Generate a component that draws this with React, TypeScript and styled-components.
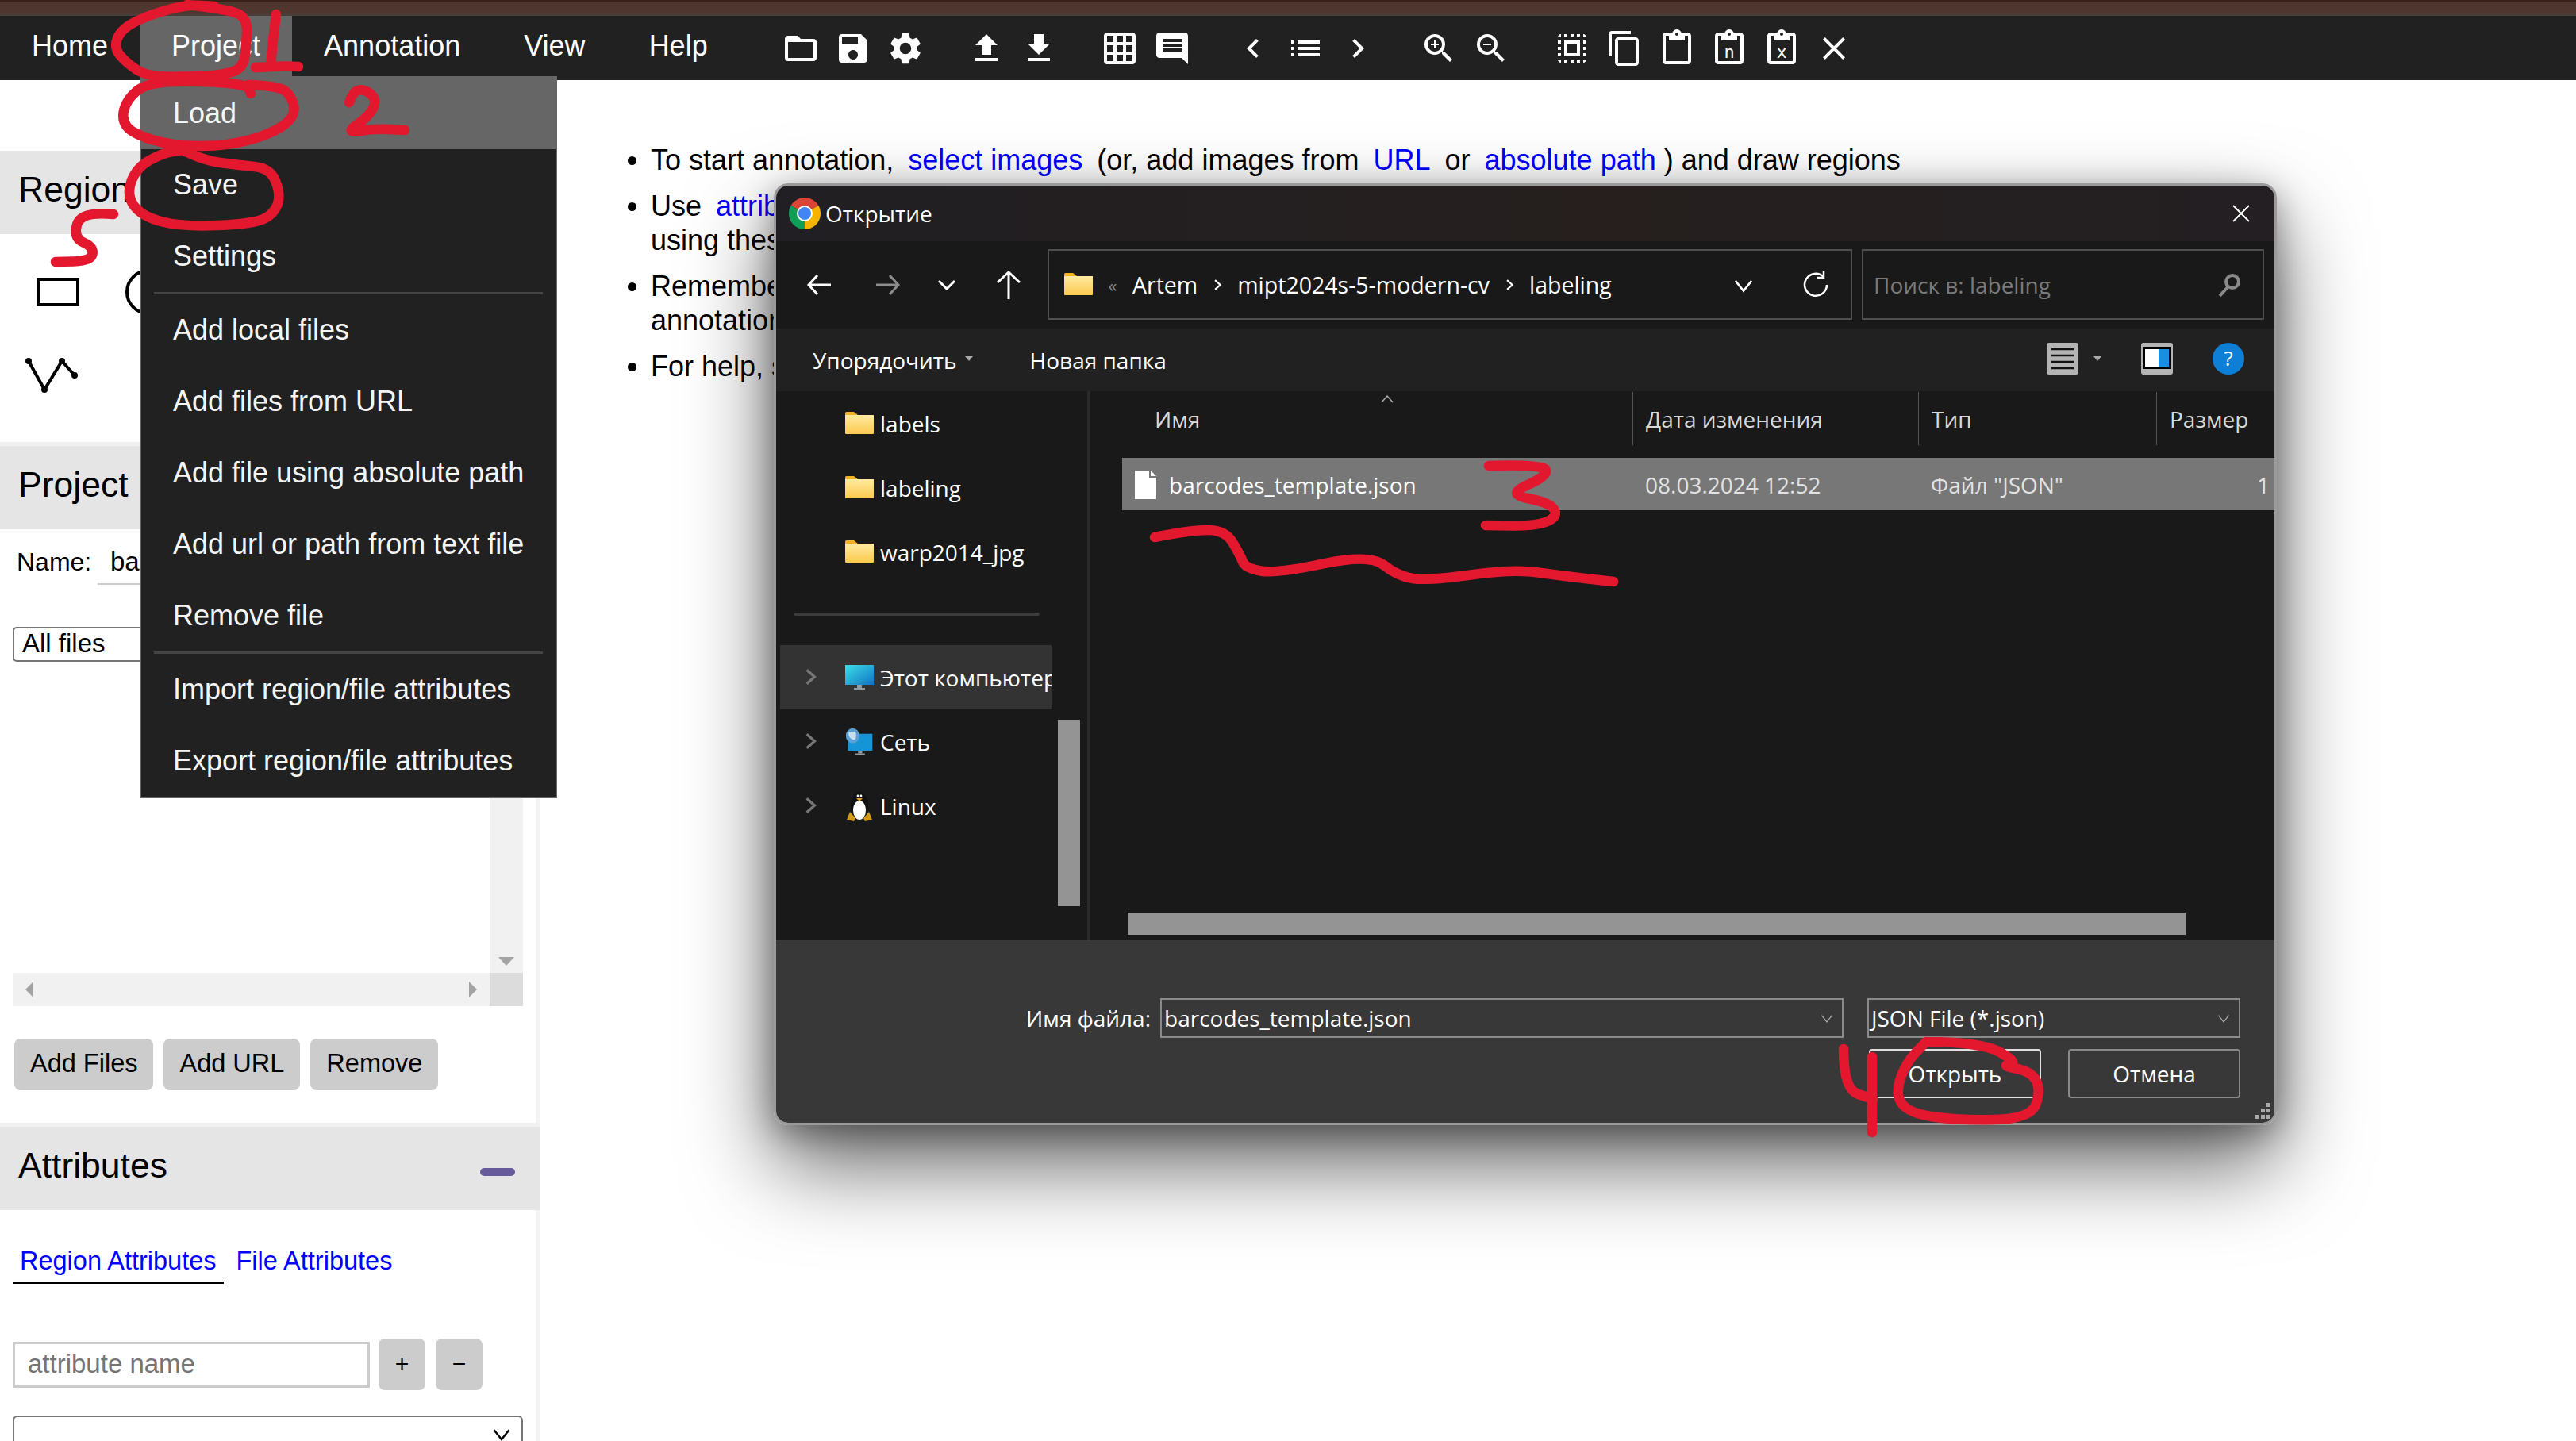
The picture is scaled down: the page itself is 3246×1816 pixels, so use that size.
import React from "react";
import styled, { createGlobalStyle } from "styled-components";
import {
  MdSave,
  MdSettings,
  MdFileUpload,
  MdFileDownload,
  MdGridOn,
  MdComment,
  MdNavigateBefore,
  MdNavigateNext,
  MdList,
  MdZoomIn,
  MdZoomOut,
  MdSelectAll,
  MdContentCopy,
  MdClose,
} from "react-icons/md";

const WIN_FONT = `"Open Sans", "Noto Sans", sans-serif`;

const PASTE_PATH =
  "M19 2h-4.18C14.4.84 13.3 0 12 0c-1.3 0-2.4.84-2.82 2H5c-1.1 0-2 .9-2 2v16c0 1.1.9 2 2 2h14c1.1 0 2-.9 2-2V4c0-1.1-.9-2-2-2zm-7 0c.55 0 1 .45 1 1s-.45 1-1 1-1-.45-1-1 .45-1 1-1zm7 18H5V4h2v3h10V4h2v16z";

const MENU_ITEMS = ["Home", "Project", "Annotation", "View", "Help"];

const PROJECT_MENU = [
  ["Load", "Save", "Settings"],
  ["Add local files", "Add files from URL", "Add file using absolute path", "Add url or path from text file", "Remove file"],
  ["Import region/file attributes", "Export region/file attributes"],
];

// hand drawn marks on top of the screenshot, page coordinates
const MARKS: number[][][] = [
  [[236, 6], [290, 12], [312, 24], [310, 60], [306, 86], [280, 95], [225, 97], [185, 96], [160, 80], [143, 60], [153, 36], [190, 18], [236, 6], [270, 8]],
  [[348, 18], [344, 50], [341, 84]],
  [[322, 85], [350, 83], [376, 84]],
  [[312, 107], [350, 108], [367, 120], [373, 146], [344, 168], [287, 184], [217, 184], [166, 168], [153, 150], [160, 125], [185, 104], [255, 102], [312, 107], [316, 118]],
  [[440, 129], [445, 115], [459, 112], [475, 125], [466, 146], [434, 168], [472, 162], [510, 164]],
  [[230, 189], [255, 202], [300, 208], [341, 212], [354, 246], [345, 270], [319, 282], [230, 286], [179, 273], [159, 246], [172, 211], [205, 193], [230, 189]],
  [[143, 270], [102, 266], [92, 300], [118, 311], [115, 329], [70, 330]],
  [[1876, 587], [1946, 585], [1950, 600], [1898, 623], [1952, 633], [1964, 650], [1938, 663], [1872, 662]],
  [[1455, 677], [1500, 668], [1544, 668], [1563, 700], [1569, 716], [1608, 723], [1726, 698], [1761, 726], [1799, 732], [1907, 717], [1970, 726], [2033, 733]],
  [[2323, 1322], [2323, 1373], [2360, 1385]],
  [[2359, 1332], [2359, 1427]],
  [[2427, 1313], [2498, 1313], [2544, 1340], [2521, 1343], [2559, 1350], [2572, 1373], [2559, 1410], [2467, 1412], [2406, 1403], [2388, 1380], [2401, 1340], [2427, 1313]],
];

const smoothPath = (pts: number[][]) => {
  let d = `M${pts[0][0]} ${pts[0][1]}`;
  for (let i = 1; i < pts.length - 1; i++) {
    const mx = (pts[i][0] + pts[i + 1][0]) / 2;
    const my = (pts[i][1] + pts[i + 1][1]) / 2;
    d += ` Q${pts[i][0]} ${pts[i][1]} ${mx} ${my}`;
  }
  const last = pts[pts.length - 1];
  return `${d} L${last[0]} ${last[1]}`;
};

const GlobalStyle = createGlobalStyle`
  html, body {
    margin: 0;
    width: 3246px;
    height: 1816px;
    overflow: hidden;
    background: #fff;
    font-family: "Liberation Sans", Arial, sans-serif;
  }
  * { box-sizing: border-box; }
`;

const Page = styled.div`
  position: relative;
  width: 3246px;
  height: 1816px;
  overflow: hidden;
  display: flex;
  flex-direction: column;
`;

const BrowserStrip = styled.div`
  height: 20px;
  flex: none;
  background: #4f362e;
  border-top: 2px solid #3a2118;
  border-bottom: 3px solid #4a3c38;
`;

const TopBar = styled.div`
  height: 81px;
  flex: none;
  background: #212121;
  display: flex;
  align-items: flex-start;
`;

const TopItem = styled.div<{ $active?: boolean }>`
  height: 76px;
  padding: 0 40px;
  font-size: 36px;
  line-height: 76px;
  color: #fff;
  background: ${(p) => (p.$active ? "#666" : "transparent")};
`;

const Tools = styled.div`
  display: flex;
  align-items: center;
  height: 81px;
  margin-left: 53px;
  gap: 54px;
`;

const ToolGroup = styled.div`
  display: flex;
  align-items: center;
  gap: 18px;
  color: #fff;
  svg {
    display: block;
    width: 48px;
    height: 48px;
    fill: #fff;
  }
`;

const Main = styled.div`
  flex: 1;
  display: flex;
  min-height: 0;
`;

const Sidebar = styled.div`
  width: 680px;
  flex: none;
  padding-top: 89px;
  overflow: hidden;
  background: linear-gradient(90deg, #fff 675px, #f3f3f3 675px);
`;

const SectionTitle = styled.div`
  height: 105px;
  background: #e5e5e5;
  padding: 0 24px 8px 23px;
  font-size: 44.5px;
  color: #000;
  display: flex;
  align-items: center;
  justify-content: space-between;
`;

const Collapse = styled.div`
  width: 44px;
  height: 10px;
  margin: 16px 7px 0 0;
  border-radius: 5px;
  background: #675a9b;
`;

const Divider = styled.div`
  height: 5px;
  background: #f0f0f0;
`;

const ShapeGrid = styled.div`
  display: grid;
  grid-template-columns: 127px 127px;
  grid-auto-rows: 105px;
  align-items: center;
  padding: 20px 0 32px 30px;
  svg {
    display: block;
    fill: none;
    stroke: #000;
    stroke-width: 4;
  }
`;

const ProjectBody = styled.div`
  width: 675px;
  height: 748px;
  padding: 0 16px;
  display: flex;
  flex-direction: column;
`;

const NameRow = styled.div`
  height: 70px;
  display: flex;
  align-items: flex-end;
  font-size: 32px;
  color: #000;
`;

const NameLabel = styled.span`
  width: 107px;
  padding: 0 0 10px 5px;
`;

const NameInput = styled.span`
  flex: 1;
  padding: 0 0 8px 16px;
  font-size: 33px;
  border-bottom: 2px solid #ccc;
`;

const FilterSelect = styled.div`
  width: 643px;
  height: 44px;
  margin-top: 53px;
  padding: 0 10px;
  flex: none;
  border: 2px solid #767676;
  border-radius: 5px;
  font-size: 33px;
  line-height: 38px;
`;

const FileList = styled.div`
  width: 643px;
  height: 426px;
  margin-top: 8px;
  flex: none;
  display: grid;
  grid-template-columns: 1fr 42px;
  grid-template-rows: 1fr 42px;
`;

const ListPane = styled.div`
  background: #fff;
`;

const VTrack = styled.div`
  background: #f1f1f1;
  display: flex;
  align-items: flex-end;
  justify-content: center;
  padding-bottom: 9px;
`;

const HTrack = styled.div`
  background: #f1f1f1;
  display: flex;
  align-items: center;
  justify-content: space-between;
  padding: 0 16px;
`;

const Corner = styled.div`
  background: #dcdcdc;
`;

const Arrow = styled.i<{ $dir: "left" | "right" | "down" }>`
  display: block;
  width: 0;
  height: 0;
  ${(p) =>
    p.$dir === "down"
      ? "border-left: 10px solid transparent; border-right: 10px solid transparent; border-top: 11px solid #a3a3a3;"
      : `border-top: 10px solid transparent; border-bottom: 10px solid transparent; border-${
          p.$dir === "left" ? "right" : "left"
        }: 10px solid #a3a3a3;`}
`;

const ButtonRow = styled.div`
  display: flex;
  gap: 13px;
  margin: 41px 0 0 2px;
`;

const GrayButton = styled.div<{ $square?: boolean }>`
  height: 65px;
  padding: 0 ${(p) => (p.$square ? "0" : "20px")};
  width: ${(p) => (p.$square ? "59px" : "auto")};
  border-radius: 8px;
  background: #ccc;
  color: #000;
  font-size: ${(p) => (p.$square ? "30px" : "32.5px")};
  line-height: 63px;
  text-align: center;
`;

const Tabs = styled.div`
  display: flex;
  gap: 16px;
  padding: 46px 16px 0;
  font-size: 32.5px;
`;

const Tab = styled.div<{ $active?: boolean }>`
  height: 47px;
  padding: 0 ${(p) => (p.$active ? "9px" : "0")};
  color: #00f;
  border-bottom: ${(p) => (p.$active ? "3px solid #000" : "none")};
`;

const AttrRow = styled.div`
  display: flex;
  align-items: center;
  gap: 13px;
  padding: 69px 0 0 16px;
`;

const AttrInput = styled.div`
  width: 450px;
  height: 58px;
  margin-right: -2px;
  padding-left: 16px;
  border: 3px solid #ccc;
  font-size: 33px;
  line-height: 50px;
  color: #757575;
`;

const AttrSelect = styled.div`
  width: 643px;
  height: 60px;
  margin: 32px 0 0 16px;
  border: 2px solid #767676;
  border-radius: 6px;
  display: flex;
  justify-content: flex-end;
  padding: 8px 12px 0 0;
`;

const Content = styled.ul`
  flex: 1;
  margin: 0;
  padding: 79px 0 0 140px;
  font-size: 36px;
  line-height: 43px;
  color: #000;
  white-space: nowrap;
`;

const Hint = styled.li`
  margin-bottom: 15px;
`;

const Link = styled.span<{ $tight?: boolean }>`
  color: #00f;
  padding: 0 ${(p) => (p.$tight ? "0" : "8px")} 0 8px;
`;

const ProjectMenu = styled.div`
  position: absolute;
  left: 176px;
  top: 96px;
  width: 526px;
  background: #212121;
  border: 2px solid #666;
`;

const MenuRow = styled.div<{ $hover?: boolean }>`
  height: 90px;
  padding-left: 40px;
  font-size: 36px;
  line-height: 90px;
  color: #f4f4f4;
  background: ${(p) => (p.$hover ? "#666" : "transparent")};
`;

const MenuRule = styled.div`
  height: 3px;
  margin: 0 16px;
  background: #454545;
`;

const Dialog = styled.div`
  position: absolute;
  left: 975px;
  top: 231px;
  width: 1894px;
  height: 1187px;
  display: flex;
  flex-direction: column;
  overflow: hidden;
  border: 3px solid #9a9a9a;
  border-radius: 18px;
  font-family: ${WIN_FONT};
  font-size: 28px;
  color: #fff;
`;

const DialogShadow = styled.div`
  position: absolute;
  left: 975px;
  top: 231px;
  width: 1894px;
  height: 1187px;
  border-radius: 18px;
  box-shadow: 0 50px 110px rgba(0, 0, 0, 0.6), 0 10px 40px rgba(0, 0, 0, 0.35);
`;

const TitleBar = styled.div`
  height: 70px;
  flex: none;
  display: flex;
  align-items: center;
  padding: 0 31px 0 16px;
  background: linear-gradient(90deg, #211f23, #261f1e 55%, #231f22);
`;

const Fill = styled.div`
  flex: 1;
`;

const TitleText = styled.span`
  margin-left: 6px;
`;

const AddressRow = styled.div`
  height: 110px;
  flex: none;
  display: flex;
  align-items: flex-start;
  padding-top: 10px;
  background: #191919;
`;

const NavButtons = styled.div`
  width: 342px;
  height: 89px;
  flex: none;
  display: flex;
  align-items: center;
  padding-left: 37px;
`;

const AddressBox = styled.div`
  width: 1014px;
  height: 89px;
  flex: none;
  display: flex;
  align-items: center;
  padding: 0 27px 0 19px;
  border: 2px solid #4f4f4f;
  font-size: 28.5px;
`;

const Crumb = styled.span<{ $mute?: boolean }>`
  color: ${(p) => (p.$mute ? "#8a8a8a" : "#fff")};
  font-size: ${(p) => (p.$mute ? "22px" : "inherit")};
`;

const SearchBox = styled.div`
  width: 507px;
  height: 89px;
  margin-left: 12px;
  flex: none;
  display: flex;
  align-items: center;
  justify-content: space-between;
  padding: 0 26px 0 13px;
  border: 2px solid #4f4f4f;
  color: #7a7a7a;
`;

const CommandBar = styled.div`
  height: 79px;
  flex: none;
  display: flex;
  align-items: center;
  padding: 0 38px 0 46px;
  background: #212121;
  svg {
    margin-bottom: 3px;
  }
`;

const CommandGap = styled.div<{ $w: number }>`
  width: ${(p) => p.$w}px;
  flex: none;
`;

const BodyRow = styled.div`
  height: 692px;
  flex: none;
  display: flex;
  background: #191919;
`;

const NavPane = styled.div`
  width: 396px;
  flex: none;
  display: flex;
  border-right: 4px solid #2a2a2a;
  padding-left: 5px;
`;

const NavList = styled.div`
  width: 342px;
  flex: none;
`;

const NavRow = styled.div<{ $hover?: boolean }>`
  height: 81px;
  display: flex;
  align-items: center;
  padding-left: 26px;
  white-space: nowrap;
  overflow: hidden;
  background: ${(p) => (p.$hover ? "#333" : "transparent")};
`;

const NavSlot = styled.div`
  width: 56px;
  flex: none;
`;

const NavLabel = styled.span`
  margin-left: 8px;
`;

const NavRule = styled.div`
  height: 4px;
  margin: 36px 15px 37px 17px;
  border-radius: 2px;
  background: #3c3c3c;
`;

const NavScroll = styled.div`
  width: 28px;
  height: 235px;
  margin: 414px 0 0 8px;
  flex: none;
  background: #949494;
`;

const FileArea = styled.div`
  flex: 1;
  display: flex;
  flex-direction: column;
  position: relative;
  min-width: 0;
`;

const Columns = styled.div<{ $first: number }>`
  display: grid;
  grid-template-columns: ${(p) => p.$first}px 360px 300px 1fr;
`;

const HeadRow = styled(Columns)`
  height: 84px;
  padding-top: 1px;
  align-items: start;
  color: #d8d8d8;
`;

const HeadCell = styled.div`
  position: relative;
  height: 67px;
  line-height: 68px;
  padding-left: 16px;
  border-left: 1px solid #555;
  white-space: nowrap;
`;

const NameHead = styled(HeadCell)`
  padding-left: 81px;
  border-left: none;
`;

const SortCaret = styled.svg`
  position: absolute;
  left: 366px;
  top: 4px;
`;

const FileRow = styled(Columns)`
  height: 66px;
  margin-left: 40px;
  padding-top: 2px;
  align-items: center;
  background: #777;
  color: #e2e2e2;
  white-space: nowrap;
  overflow: hidden;
`;

const FileName = styled.div`
  display: flex;
  align-items: center;
  gap: 16px;
  padding-left: 16px;
  color: #fff;
`;

const FileCell = styled.div`
  padding-left: 16px;
`;

const SizeCell = styled.div`
  text-align: right;
  padding-right: 6px;
`;

const HScroll = styled.div`
  width: 1333px;
  height: 28px;
  margin: auto 0 7px 47px;
  flex: none;
  background: #949494;
`;

const Footer = styled.div`
  flex: 1;
  position: relative;
  background: #383838;
  padding: 73px 43px 0 0;
  display: flex;
  flex-direction: column;
  align-items: flex-end;
`;

const FieldRow = styled.div`
  display: flex;
  align-items: center;
  gap: 30px;
`;

const FieldLabel = styled.span`
  margin-right: -18px;
`;

const Field = styled.div<{ $w: number }>`
  width: ${(p) => p.$w}px;
  height: 50px;
  display: flex;
  align-items: center;
  justify-content: space-between;
  padding: 0 10px 0 3px;
  border: 2px solid #8a8a8a;
`;

const ActionRow = styled.div`
  display: flex;
  gap: 34px;
  margin-top: 14px;
`;

const ActionButton = styled.div<{ $primary?: boolean }>`
  width: 217px;
  height: 62px;
  line-height: 58px;
  text-align: center;
  border: 2px solid ${(p) => (p.$primary ? "#e0e0e0" : "#8a8a8a")};
  border-radius: 4px;
`;

const Grip = styled.svg`
  position: absolute;
  right: 5px;
  bottom: 5px;
`;

const MarkLayer = styled.svg`
  position: absolute;
  left: 0;
  top: 0;
  pointer-events: none;
  path {
    fill: none;
    stroke: #e3182f;
    stroke-width: 12.5;
    stroke-linecap: round;
    stroke-linejoin: round;
  }
`;

const IconBox = styled.span<{ $w: number; $mr?: number }>`
  display: flex;
  flex: none;
  align-items: center;
  justify-content: center;
  width: ${(p) => p.$w}px;
  margin-right: ${(p) => p.$mr || 0}px;
`;

const Chevron = ({ dir = "down", size = 22, color = "#fff", weight = 2 }: { dir?: "down" | "right"; size?: number; color?: string; weight?: number }) => (
  <svg width={size} height={size} viewBox="0 0 22 22" fill="none" stroke={color} strokeWidth={weight}>
    <path d={dir === "down" ? "M3 7l8 10 8-10" : "M7 3l9 8-9 8"} />
  </svg>
);

const FolderOutline = () => (
  <svg viewBox="0 0 24 24">
    <path d="M20 6h-8l-2-2H4c-1.1 0-1.99.9-1.99 2L2 18c0 1.1.9 2 2 2h16c1.1 0 2-.9 2-2V8c0-1.1-.9-2-2-2zm0 12H4V8h16v10z" />
  </svg>
);

const PasteIcon = ({ letter }: { letter?: string }) => (
  <svg viewBox="0 0 24 24">
    <path d={PASTE_PATH} />
    {letter && (
      <text x="12" y="18" textAnchor="middle" fontSize="11" fontFamily="DejaVu Sans Mono, monospace">
        {letter}
      </text>
    )}
  </svg>
);

const YellowFolder = ({ w = 36 }: { w?: number }) => (
  <svg width={w} height={w * 0.78} viewBox="0 0 36 28">
    <defs>
      <linearGradient id="fold" x1="0" y1="0" x2="0" y2="1">
        <stop offset="0" stopColor="#ffeaa0" />
        <stop offset="1" stopColor="#fcc94f" />
      </linearGradient>
    </defs>
    <path d="M0 1.5Q0 0 1.5 0H11l5 4H36V8H0z" fill="#f5b324" />
    <rect y="4" width="36" height="24" rx="1" fill="url(#fold)" />
  </svg>
);

const Monitor = () => (
  <svg width="36" height="32" viewBox="0 0 36 32">
    <defs>
      <linearGradient id="screen" x1="0" y1="0" x2="1" y2="1">
        <stop offset="0" stopColor="#3fdde8" />
        <stop offset="1" stopColor="#0f74c4" />
      </linearGradient>
    </defs>
    <rect width="36" height="25" fill="url(#screen)" />
    <rect x="15" y="25" width="6" height="4" fill="#8f9ba3" />
    <rect x="11" y="29" width="14" height="2" fill="#8f9ba3" />
  </svg>
);

const NetworkIcon = () => (
  <svg width="42" height="40" viewBox="0 0 42 40">
    <rect x="4" y="8" width="36" height="25" fill="#1595d6" />
    <rect x="19" y="33" width="6" height="4" fill="#8f9ba3" />
    <rect x="15" y="37" width="14" height="2" fill="#8f9ba3" />
    <ellipse cx="11" cy="11" rx="10" ry="11" fill="#5b9fd4" />
    <path d="M5 5q5 2 8 0t3 6-6 5-5-11z" fill="#c9dfee" />
  </svg>
);

const Tux = () => (
  <svg width="34" height="40" viewBox="0 0 34 40">
    <ellipse cx="17" cy="20" rx="11" ry="18" fill="#111" />
    <ellipse cx="17" cy="25" rx="8" ry="12" fill="#fff" />
    <circle cx="15" cy="7" r="1.4" fill="#fff" />
    <circle cx="19" cy="7" r="1.4" fill="#fff" />
    <path d="M13 10h8l-4 4z" fill="#e0a020" />
    <path d="M1 37l4-10 7 8-2 4zM33 37l-4-10-7 8 2 4z" fill="#d49a18" />
  </svg>
);

const FileGlyph = () => (
  <svg width="27" height="36" viewBox="0 0 27 36">
    <path d="M0 0h18v9h9v27H0z" fill="#fff" />
    <path d="M20 0l7 7h-7z" fill="#fff" />
  </svg>
);

const ChromeLogo = () => (
  <svg width="40" height="40" viewBox="0 0 40 40">
    <path d="M20 20L2.68 10A20 20 0 0 1 37.32 10Z" fill="#db4437" />
    <path d="M20 20L37.32 10A20 20 0 0 1 20 40Z" fill="#f4b400" />
    <path d="M20 20L20 40A20 20 0 0 1 2.68 10Z" fill="#0f9d58" />
    <circle cx="20" cy="20" r="10" fill="#fff" />
    <circle cx="20" cy="20" r="8" fill="#4285f4" />
  </svg>
);

const App = () => (
  <Page>
    <GlobalStyle />
    <BrowserStrip />
    <TopBar>
      {MENU_ITEMS.map((item) => (
        <TopItem key={item} $active={item === "Project"}>
          {item}
        </TopItem>
      ))}
      <Tools>
        <ToolGroup>
          <FolderOutline />
          <MdSave />
          <MdSettings />
        </ToolGroup>
        <ToolGroup>
          <MdFileUpload />
          <MdFileDownload />
        </ToolGroup>
        <ToolGroup>
          <MdGridOn />
          <MdComment />
        </ToolGroup>
        <ToolGroup>
          <MdNavigateBefore />
          <MdList />
          <MdNavigateNext />
        </ToolGroup>
        <ToolGroup>
          <MdZoomIn />
          <MdZoomOut />
        </ToolGroup>
        <ToolGroup>
          <MdSelectAll />
          <MdContentCopy />
          <PasteIcon />
          <PasteIcon letter="n" />
          <PasteIcon letter="x" />
          <MdClose />
        </ToolGroup>
      </Tools>
    </TopBar>

    <Main>
      <Sidebar>
        <SectionTitle>Region Shape</SectionTitle>
        <ShapeGrid>
          <svg width="72" height="40" viewBox="0 0 72 40">
            <rect x="18" y="4" width="50" height="32" />
          </svg>
          <svg width="60" height="60" viewBox="0 0 60 60">
            <ellipse cx="30" cy="30" rx="27" ry="27" />
          </svg>
          <svg width="72" height="44" viewBox="0 0 72 44">
            <path d="M6 4l20 36 22-36 16 18" />
            <circle cx="6" cy="4" r="2" />
            <circle cx="26" cy="40" r="2" />
            <circle cx="48" cy="4" r="2" />
            <circle cx="64" cy="22" r="2" />
          </svg>
        </ShapeGrid>
        <Divider />
        <SectionTitle>Project</SectionTitle>
        <ProjectBody>
          <NameRow>
            <NameLabel>Name:</NameLabel>
            <NameInput>barcodes</NameInput>
          </NameRow>
          <FilterSelect>All files</FilterSelect>
          <FileList>
            <ListPane />
            <VTrack>
              <Arrow $dir="down" />
            </VTrack>
            <HTrack>
              <Arrow $dir="left" />
              <Arrow $dir="right" />
            </HTrack>
            <Corner />
          </FileList>
          <ButtonRow>
            <GrayButton>Add Files</GrayButton>
            <GrayButton>Add URL</GrayButton>
            <GrayButton>Remove</GrayButton>
          </ButtonRow>
        </ProjectBody>
        <Divider />
        <SectionTitle>
          Attributes
          <Collapse />
        </SectionTitle>
        <Tabs>
          <Tab $active>Region Attributes</Tab>
          <Tab>File Attributes</Tab>
        </Tabs>
        <AttrRow>
          <AttrInput>attribute name</AttrInput>
          <GrayButton $square>+</GrayButton>
          <GrayButton $square>−</GrayButton>
        </AttrRow>
        <AttrSelect>
          <Chevron size={26} color="#000" />
        </AttrSelect>
      </Sidebar>

      <Content>
        <Hint>
          To start annotation, <Link>select images</Link> (or, add images from <Link>URL</Link> or{" "}
          <Link $tight>absolute path</Link> ) and draw regions
        </Hint>
        <Hint>
          Use <Link>attribute editor</Link> to define the shape, and annotate each region
          <br />
          using these attributes
        </Hint>
        <Hint>
          Remember to save your project before closing this application so that you can load it
          <br />
          annotation later
        </Hint>
        <Hint>
          For help, see the <Link>Getting Started</Link> page
        </Hint>
      </Content>
    </Main>

    <ProjectMenu>
      {PROJECT_MENU.map((group, i) => (
        <React.Fragment key={group[0]}>
          {i > 0 && <MenuRule />}
          {group.map((label) => (
            <MenuRow key={label} $hover={label === "Load"}>
              {label}
            </MenuRow>
          ))}
        </React.Fragment>
      ))}
    </ProjectMenu>

    <DialogShadow />
    <Dialog>
      <TitleBar>
        <ChromeLogo />
        <TitleText>Открытие</TitleText>
        <Fill />
        <svg width="22" height="22" viewBox="0 0 22 22" stroke="#fff" strokeWidth="2">
          <path d="M1 1l20 20M21 1L1 21" />
        </svg>
      </TitleBar>

      <AddressRow>
        <NavButtons>
          <IconBox $w={34} $mr={53}>
            <svg width="32" height="28" viewBox="0 0 32 28" fill="none" stroke="#fff" strokeWidth="3">
              <path d="M14 2L3 14l11 12M3 14h28" />
            </svg>
          </IconBox>
          <IconBox $w={34} $mr={44}>
            <svg width="32" height="28" viewBox="0 0 32 28" fill="none" stroke="#8c8c8c" strokeWidth="3">
              <path d="M18 2l11 12-11 12M29 14H1" />
            </svg>
          </IconBox>
          <IconBox $w={26} $mr={48}>
            <svg width="24" height="14" viewBox="0 0 24 14" fill="none" stroke="#fff" strokeWidth="3">
              <path d="M2 2l10 10L22 2" />
            </svg>
          </IconBox>
          <svg width="34" height="36" viewBox="0 0 34 36" fill="none" stroke="#fff" strokeWidth="3">
            <path d="M3 15L17 2l14 13M17 2v34" />
          </svg>
        </NavButtons>
        <AddressBox>
          <YellowFolder />
          <IconBox $w={50}>
            <Crumb $mute>«</Crumb>
          </IconBox>
          <Crumb>Artem</Crumb>
          <IconBox $w={50}>
            <Chevron dir="right" size={16} weight={3} />
          </IconBox>
          <Crumb>mipt2024s-5-modern-cv</Crumb>
          <IconBox $w={50}>
            <Chevron dir="right" size={16} weight={3} />
          </IconBox>
          <Crumb>labeling</Crumb>
          <Fill />
          <IconBox $w={28} $mr={60}>
            <Chevron size={28} />
          </IconBox>
          <svg width="34" height="36" viewBox="0 0 34 36" fill="none" stroke="#fff" strokeWidth="2.5">
            <path d="M27 8a14 14 0 1 0 4 10" />
            <path d="M27 1v8h-8" />
          </svg>
        </AddressBox>
        <SearchBox>
          Поиск в: labeling
          <svg width="32" height="32" viewBox="0 0 32 32" fill="none" stroke="#8a8a8a" strokeWidth="4">
            <circle cx="20" cy="12" r="8" />
            <path d="M14 19L4 30" />
          </svg>
        </SearchBox>
      </AddressRow>

      <CommandBar>
        Упорядочить
        <IconBox $w={30}>
          <svg width="10" height="6" viewBox="0 0 10 6" fill="#aaa">
            <path d="M0 0h10L5 6z" />
          </svg>
        </IconBox>
        <CommandGap $w={62} />
        Новая папка
        <Fill />
        <svg width="40" height="40" viewBox="0 0 40 40">
          <rect width="40" height="40" rx="3" fill="#b4b4b4" />
          <path d="M6 8h28M6 16h28M6 24h28M6 32h28" stroke="#111" strokeWidth="2.5" />
        </svg>
        <IconBox $w={48} $mr={31}>
          <svg width="10" height="6" viewBox="0 0 10 6" fill="#aaa">
            <path d="M0 0h10L5 6z" />
          </svg>
        </IconBox>
        <svg width="40" height="40" viewBox="0 0 40 40">
          <rect width="40" height="40" rx="3" fill="#b4b4b4" />
          <rect x="2" y="5" width="36" height="28" fill="#000" />
          <rect x="5" y="8" width="17" height="22" fill="#fff" />
          <rect x="22" y="8" width="13" height="22" fill="#1a8fe0" />
        </svg>
        <CommandGap $w={50} />
        <svg width="40" height="40" viewBox="0 0 40 40">
          <circle cx="20" cy="20" r="20" fill="#0d7fd6" />
          <text x="20" y="29" textAnchor="middle" fontSize="26" fill="#fff" fontFamily="Open Sans, sans-serif">
            ?
          </text>
        </svg>
      </CommandBar>

      <BodyRow>
        <NavPane>
          <NavList>
            {["labels", "labeling", "warp2014_jpg"].map((name) => (
              <NavRow key={name}>
                <NavSlot />
                <YellowFolder />
                <NavLabel>{name}</NavLabel>
              </NavRow>
            ))}
            <NavRule />
            <NavRow $hover>
              <NavSlot>
                <Chevron dir="right" size={24} color="#777" weight={3} />
              </NavSlot>
              <IconBox $w={36}>
                <Monitor />
              </IconBox>
              <NavLabel>Этот компьютер</NavLabel>
            </NavRow>
            <NavRow>
              <NavSlot>
                <Chevron dir="right" size={24} color="#777" weight={3} />
              </NavSlot>
              <IconBox $w={36}>
                <NetworkIcon />
              </IconBox>
              <NavLabel>Сеть</NavLabel>
            </NavRow>
            <NavRow>
              <NavSlot>
                <Chevron dir="right" size={24} color="#777" weight={3} />
              </NavSlot>
              <IconBox $w={36}>
                <Tux />
              </IconBox>
              <NavLabel>Linux</NavLabel>
            </NavRow>
          </NavList>
          <NavScroll />
        </NavPane>

        <FileArea>
          <HeadRow $first={683}>
            <NameHead>
              Имя
              <SortCaret width="16" height="10" viewBox="0 0 16 10" fill="none" stroke="#aaa" strokeWidth="1.5">
                <path d="M1 9l7-8 7 8" />
              </SortCaret>
            </NameHead>
            <HeadCell>Дата изменения</HeadCell>
            <HeadCell>Тип</HeadCell>
            <HeadCell>Размер</HeadCell>
          </HeadRow>
          <FileRow $first={643}>
            <FileName>
              <FileGlyph />
              barcodes_template.json
            </FileName>
            <FileCell>08.03.2024 12:52</FileCell>
            <FileCell>Файл "JSON"</FileCell>
            <SizeCell>1</SizeCell>
          </FileRow>
          <HScroll />
        </FileArea>
      </BodyRow>

      <Footer>
        <FieldRow>
          <FieldLabel>Имя файла:</FieldLabel>
          <Field $w={861}>
            barcodes_template.json
            <Chevron size={18} color="#aaa" weight={1.5} />
          </Field>
          <Field $w={470}>
            JSON File (*.json)
            <Chevron size={18} color="#aaa" weight={1.5} />
          </Field>
        </FieldRow>
        <ActionRow>
          <ActionButton $primary>Открыть</ActionButton>
          <ActionButton>Отмена</ActionButton>
        </ActionRow>
        <Grip width="20" height="20" viewBox="0 0 20 20" fill="#aaa">
          <path d="M15 0h5v5h-5zM8 7h5v5H8zM15 7h5v5h-5zM0 15h5v5H0zM8 15h5v5H8zM15 15h5v5h-5z" />
        </Grip>
      </Footer>
    </Dialog>

    <MarkLayer width="3246" height="1816" viewBox="0 0 3246 1816">
      {MARKS.map((pts) => (
        <path key={pts.join()} d={smoothPath(pts)} />
      ))}
    </MarkLayer>
  </Page>
);

export default App;
